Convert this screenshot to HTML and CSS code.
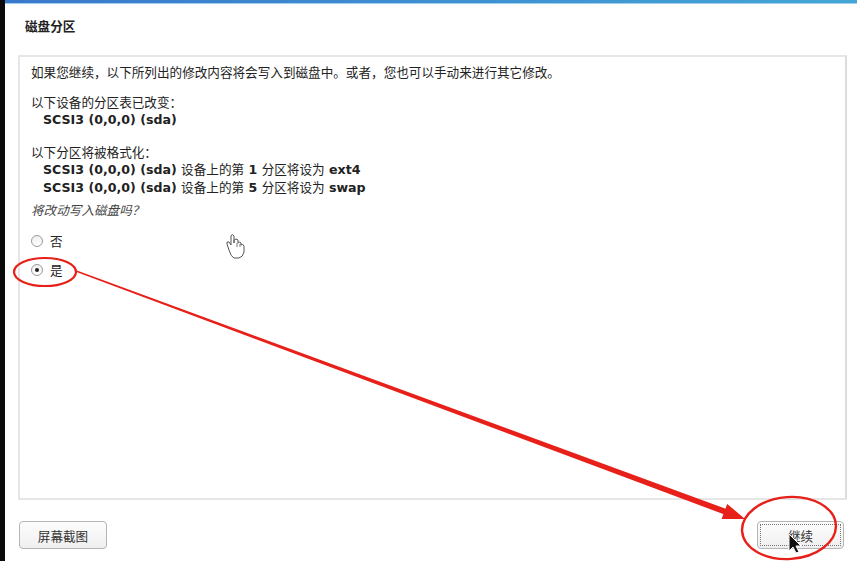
FILE: index.html
```html
<!doctype html>
<html lang="zh-CN">
  <head>
    <meta charset="UTF-8" />
    <title>磁盘分区</title>
    <link rel="stylesheet" href="styles.css">
  </head>
  <body>
    <div class="screen">
      <div class="top-bar"></div>
      <div class="installer">
        <h2 class="page-title">磁盘分区</h2>

        <div class="panel">
          <p class="intro">如果您继续，以下所列出的修改内容将会写入到磁盘中。或者，您也可以手动来进行其它修改。</p>

          <div class="group">
            <p>以下设备的分区表已改变：</p>
            <p class="item">SCSI3 (0,0,0) (sda)</p>
          </div>

          <div class="group last">
            <p>以下分区将被格式化：</p>
            <p class="item">SCSI3 (0,0,0) (sda) <span class="plain">设备上的第</span> 1 <span class="plain">分区将设为</span> ext4</p>
            <p class="item">SCSI3 (0,0,0) (sda) <span class="plain">设备上的第</span> 5 <span class="plain">分区将设为</span> swap</p>
          </div>

          <p class="question">将改动写入磁盘吗？</p>

          <div class="choices">
            <label class="choice"><span class="radio"></span>否</label>
            <label class="choice"><span class="radio checked"></span>是</label>
          </div>
        </div>

        <div class="button-row">
          <button class="btn">屏幕截图</button>
          <button class="btn primary"><span class="focus">继续</span></button>
        </div>
      </div>

      <!-- annotations drawn over the screenshot -->
      <svg class="marks" width="857" height="561" viewBox="0 0 857 561">
        <ellipse cx="45" cy="272" rx="31" ry="14" fill="none" stroke="#e8201a" stroke-width="2.2" />
        <polygon points="75.8,271.7 76.2,270.3 729.1,509.9 727.1,515.5" fill="#e8201a" />
        <polygon points="745,519 721.6,518.9 727.2,503.9" fill="#e8201a" />
        <ellipse cx="789" cy="528" rx="47" ry="31" fill="none" stroke="#e8201a" stroke-width="2.4" transform="rotate(-4 789 528)" />

        <!-- hand cursor -->
        <path d="M229 250 L227 244 Q226 241 229 242 L231 245 L231 236 Q232 233 234 236 L234 243 L234 240 Q236 238 238 240 L238 243 Q240 241 241 243 L241 245 Q243 243 244 246 L244 252 Q243 257 239 258 L234 258 Q231 257 229 250 Z" fill="#fff" stroke="#555" stroke-width="1" />
        <path d="M237 243 L237 247 M240 244 L240 247" stroke="#555" stroke-width="0.8" />

        <!-- arrow cursor -->
        <path d="M789 534 L789 551 L793 547 L796 553 L799 552 L796 546 L801 546 Z" fill="#111" stroke="#fff" stroke-width="1" />
      </svg>
    </div>
  </body>
</html>
```

FILE: styles.css
```css
body {
  margin: 0;
  font-family: "DejaVu Sans", "Noto Sans CJK SC", sans-serif;
  font-size: 12.6px;
  color: #222;
  background: #fff;
}

.screen {
  position: relative;
  width: 857px;
  height: 561px;
  overflow: hidden;
  border-left: 5px solid #0a0a0a;
  box-sizing: border-box;
}

.top-bar {
  height: 3px;
  background: linear-gradient(90deg, #3a78cc, #3f93d2 60%, #44a6d6);
  border-bottom: 1px solid #9fd0ee;
}

.installer {
  padding: 0 10px 0 13px;
}

.page-title {
  margin: 13px 0 0 7px;
  height: 20px;
  font-size: 12.6px;
  font-weight: bold;
  line-height: 20px;
}

.panel {
  margin-top: 18px;
  height: 445px;
  border: 2px solid #e6e6e6;
  border-right-color: #dcdcdc;
  padding: 7px 11px;
  box-sizing: border-box;
}

.panel p {
  margin: 0;
  line-height: 17.5px;
}

.intro {
  margin-bottom: 12px !important;
}

.group {
  margin-bottom: 15px;
}

.group.last {
  margin-bottom: 0;
}

.item {
  padding-left: 12px;
  font-weight: bold;
}

.item .plain {
  font-weight: normal;
}

.question {
  margin-top: 6px !important;
  font-style: italic;
  color: #444;
}

.choices {
  margin-top: 12px;
  display: flex;
  flex-direction: column;
  gap: 11px;
}

.choice {
  display: flex;
  align-items: center;
  gap: 7px;
  height: 18px;
}

.radio {
  width: 10px;
  height: 10px;
  border: 1px solid #999;
  border-radius: 50%;
  background: linear-gradient(#f0f0f0, #fff);
  position: relative;
}

.radio.checked::after {
  content: "";
  position: absolute;
  left: 3px;
  top: 3px;
  width: 4px;
  height: 4px;
  border-radius: 50%;
  background: #222;
}

.button-row {
  margin-top: 21px;
  display: flex;
  justify-content: space-between;
  padding: 0 3px 0 1px;
}

.btn {
  width: 88px;
  height: 28px;
  font-family: "DejaVu Sans", "Noto Sans CJK SC", sans-serif;
  font-size: 12.6px;
  color: #333;
  background: linear-gradient(#fdfdfd, #efefef);
  border: 1px solid #b5b5b5;
  border-radius: 4px;
  padding: 2px;
}

.btn.primary {
  width: 87px;
}

.focus {
  display: flex;
  align-items: center;
  justify-content: center;
  height: 100%;
  border: 1px dotted #777;
  box-sizing: border-box;
}

.marks {
  position: absolute;
  left: -5px;
  top: 0;
  pointer-events: none;
}
```
